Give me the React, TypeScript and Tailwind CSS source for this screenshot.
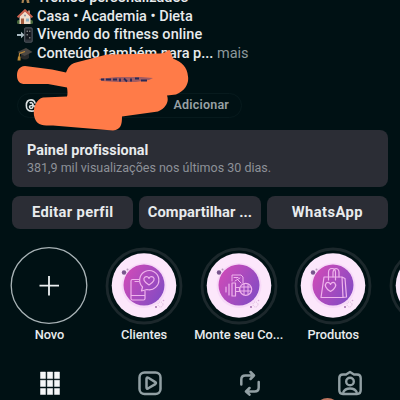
import type { ReactNode } from "react";

const swatch = "block h-4 w-4 shrink-0";

function RunnerIcon() {
  return (
    <svg viewBox="0 0 16 16" className={swatch}>
      <path d="M5.500 0h5l1 6 1 7h-2.500l-1-4-1-2-1.500 6H4.500l1-7z" fill="#a98352" />
      <path d="M6 0h4v5H6z" fill="#c49a52" />
    </svg>
  );
}

function HouseIcon() {
  return (
    <svg viewBox="0 0 16 16" className={swatch}>
      <rect x="0" y="11" width="16" height="4" rx="1.500" fill="#46683b" />
      <rect x="11" y="1.500" width="2" height="4" fill="#b98d7c" />
      <path d="M2.500 7 8 2l5.500 5v8h-11z" fill="#f0dccb" />
      <path d="M0.600 8.300 8 1.200l7.400 7.100" fill="none" stroke="#c9604d" strokeWidth="2" />
      <rect x="4" y="9.500" width="3" height="5.500" fill="#a35b3e" />
      <rect x="9" y="9.500" width="3" height="3" fill="#91b5c7" />
      <circle cx="8" cy="6.500" r="1" fill="#86929c" />
    </svg>
  );
}

function PhoneArrowIcon() {
  return (
    <svg viewBox="0 0 16 16" className={swatch}>
      <rect x="7.500" y="0.700" width="7.800" height="14.600" rx="1.300" fill="#30353c" stroke="#5f636b" strokeWidth="0.700" />
      <rect x="8.700" y="2.500" width="5.400" height="10" fill="#15181f" />
      <path d="M9.500 3.500h1.500v1.500H9.500zM12 3.500h1.500v1.500H12zM9.500 7h1.500v1.500H9.500zM12 10h1.500v1.500H12z" fill="#777b7c" />
      <path d="M0 7h4V4.800L7.500 8 4 11.200V9H0z" fill="#a9bac2" />
    </svg>
  );
}

function GraduationIcon() {
  return (
    <svg viewBox="0 0 16 16" className={swatch}>
      <path d="M4 7v5q4 3 8 0V7z" fill="#292a2a" />
      <path d="M0.500 6 9 2l6.500 4-8 4z" fill="#4b4743" />
      <path d="M8 5.500 2.500 7.500 2 13" fill="none" stroke="#b98739" strokeWidth="1.200" />
      <path d="M1 10.500h2.500v4H0.500z" fill="#bf8b35" />
    </svg>
  );
}

function BioLine({ icon, children }: { icon: ReactNode; children: ReactNode }) {
  return (
    <div className="flex h-[18.5px] items-center gap-1 whitespace-nowrap">
      {icon}
      {children}
    </div>
  );
}

function Scribble() {
  return (
    <svg viewBox="0 0 200 90" className="absolute top-[50px] left-0 h-[90px] w-[200px]">
      <path
        d="M25 15.500C19 16 17 20 17 25C17 31 20 33.500 25 33.500L48 33.500L67 37Q68 43 67 46L43 47C36 49 33 57 34 65C36 76 44 75 53 75L113 80C121 79 122 74 122 66L158 61C167 57 169 50 167 45L176 44C186 40 189 32 188 26C187 16 182 12 173 8L170 0C168 -2 167 3 160 3L107 4L76 12C69 14 68 18 66 22L52 19Z"
        transform="translate(0 .5)"
        fill="#ff7b48"
      />
      <path d="M99 29q4-1 9-1l8-1 9 0 16 0 12 1-4 2-13 2-20 0-14-1z" fill="#a25c61" />
      <path d="M101 29.500h3m2 0h5m2 0h4m3-1v3m4-3 3 3m4-3v3m4-3h4m2 2h6" fill="none" stroke="#292a56" strokeWidth="1.800" />
    </svg>
  );
}

function PhoneHeart() {
  return (
    <g>
      <path d="M34 32.500h-6.500q-1.500 0-1.500 1.500v17.500q0 1.500 1.500 1.500h11q1.500 0 1.500-1.500V44M26 48.500h14M30 34.500h3.500" />
      <path d="M37.500 40A9.600 9.600 0 1 1 42 42.500l-5.500 1.500z" />
      <path d="M44 38c-5.500-3.500-6-6-4.200-7.800 1.700-1.500 3.700-.2 4.200 1.300 .500-1.500 2.500-2.800 4.200-1.300 1.800 1.800 1.300 4.300-4.200 7.800z" />
    </g>
  );
}

function Dumbbell() {
  return (
    <g>
      <path d="M26 40v5M29 37v11M32 36v13h3.500V36zM35.500 40.500h4v4h-4" />
      <circle cx="45.700" cy="42.300" r="6" />
      <path d="M32 34v-6h9l2 2v6M34 30.500h4M35 34l5-3M37 32l4 4M41 40h9.500M40.500 44H51M44 37v10.500M48 38v9" strokeWidth="1" />
    </g>
  );
}

function ShoppingBag() {
  return (
    <g>
      <path d="M30 30h18l1 20.500H27zM48 30l3 1.500 1.500 18.500-3.500.5" />
      <path d="M34.500 33v-7.500q0-4 3.500-4t3.500 4V33M39 30v-5q.5-3 3-3.500 3 .5 3 4v4.500" />
      <path d="M36.500 44.500c-5.500-3.500-6-6.500-4.200-8.500 1.700-1.500 3.700 0 4.200 1.500 .500-1.500 2.500-3 4.200-1.500 1.800 2 1.300 5-4.200 8.500z" />
    </g>
  );
}

function Cover({ children }: { children?: ReactNode }) {
  return (
    <svg viewBox="0 0 78 78" className="h-[78px] w-[78px]">
      <defs>
        <linearGradient id="story" x1="0" y1="0.200" x2="1" y2="0.800">
          <stop stopColor="#cf4bb8" />
          <stop offset="1" stopColor="#824bc4" />
        </linearGradient>
      </defs>
      <circle cx="39" cy="39" r="37" fill="none" stroke="#1c282c" strokeWidth="2.800" />
      <circle cx="39" cy="38.500" r="32.300" fill="#fce7fb" />
      <circle cx="39" cy="38.500" r="22.500" fill="#f7d9f8" />
      <circle cx="39" cy="38" r="20.500" fill="url(#story)" />
      <circle cx="19" cy="25.500" r="2.200" fill="#78558d" />
      <circle cx="22.500" cy="22.500" r="1" fill="#b69aba" />
      <circle cx="51" cy="60" r="1" fill="#a56eac" />
      <circle cx="55.500" cy="57.500" r="2.500" fill="none" stroke="#ddb8dc" strokeDasharray="1 1" />
      <circle cx="58.500" cy="53.500" r=".8" fill="#d8a9d8" />
      <g fill="none" stroke="#efb3ec" strokeWidth="1.200" strokeLinecap="round" strokeLinejoin="round">
        {children}
      </g>
    </svg>
  );
}

function Highlight({ cover, children }: { cover: ReactNode; children?: ReactNode }) {
  return (
    <div className="flex w-[94.6px] shrink-0 flex-col items-center">
      {cover}
      <div className="mt-0.5 h-4 text-[12.8px] leading-4 font-medium tracking-[-0.06px] whitespace-nowrap text-[#e8ebed]">{children}</div>
    </div>
  );
}

function ProfileTabs() {
  return (
    <nav className="mt-[26.5px] flex h-[29px] text-[#92a0a4]">
      <div className="flex w-[100px] justify-center">
        <svg viewBox="0 0 24 26" className="h-[26px] w-6" fill="#f5f7f8">
          <path d="M2.500 2h5v6.500h-5zM9.300 2h5.400v6.500H9.300zM16.500 2h5v6.500h-5zM2.500 10.300h5v6.200h-5zM9.300 10.300h5.400v6.200H9.300zM16.500 10.300h5v6.200h-5zM2.500 18.500h5v6h-5zM9.300 18.500h5.400v6H9.300zM16.500 18.500h5v6h-5z" stroke="#f5f7f8" strokeWidth=".5" />
        </svg>
      </div>
      <div className="flex w-[100px] justify-center">
        <svg viewBox="0 0 26 26" className="h-[26px] w-[26px]" fill="none" stroke="currentColor" strokeWidth="2.500" strokeLinejoin="round">
          <rect x="2.500" y="2.500" width="21" height="21.500" rx="5" />
          <path d="M9.500 8.800q0-2 1.800-1l7 4.300q1.300 1 0 2l-7 4.200q-1.800 1-1.800-1z" />
        </svg>
      </div>
      <div className="flex w-[100px] justify-center">
        <svg viewBox="0 0 26 26" className="h-[26px] w-[26px]" fill="none" stroke="currentColor" strokeWidth="2.500" strokeLinecap="round" strokeLinejoin="round">
          <path d="M4.300 14.500V9.500q0-4 4-4H17M13.500 2 17 5.500 13.500 9" />
          <path d="M21.700 12v5.500q0 4-4 4H9M12.500 18 9 21.500l3.500 3.200" />
        </svg>
      </div>
      <div className="flex w-[100px] justify-center">
        <svg viewBox="0 0 26 26" className="h-[26px] w-[26px]" fill="none" stroke="currentColor" strokeWidth="2.400" strokeLinejoin="round">
          <path d="M6 4.500h3L13 2l4 2.500h3q3.700 0 3.700 3.500v12q0 4-3.700 4H6q-3.700 0-3.700-4V8q0-3.500 3.700-3.500z" />
          <circle cx="13" cy="11.500" r="3.800" />
          <path d="M6 23q1.500-4.500 7-4.500t7 4.500" />
        </svg>
      </div>
    </nav>
  );
}

export default function App() {
  return (
    <div className="relative h-[400px] w-[400px] overflow-hidden bg-[#001114] font-['Roboto','Noto_Sans',sans-serif] text-[#e8ebed]">
      <header className="relative h-[130px]">
        <div className="h-[63px] overflow-hidden pl-[17px] text-[14.5px] font-medium">
          <div className="-mt-[11px]">
            <BioLine icon={<RunnerIcon />}><span>Treinos personalizados</span></BioLine>
            <BioLine icon={<HouseIcon />}><span>Casa • Academia • Dieta</span></BioLine>
            <BioLine icon={<PhoneArrowIcon />}><span className="tracking-[0.07px]">Vivendo do fitness online</span></BioLine>
            <BioLine icon={<GraduationIcon />}>
              <span>Conteúdo também para p... <span className="font-normal text-[#8d989c]">mais</span></span>
            </BioLine>
          </div>
        </div>
        <div className="mt-[30px] ml-[17px] flex h-[25px] w-[225px] items-center justify-between rounded-full border border-[#071a1d] pr-2 pl-1.5">
          <svg viewBox="0 0 16 16" className="h-[15px] w-[15px]" fill="none" stroke="#dce2e3" strokeWidth="1.700">
            <path d="M12 6Q11 2 7.500 2 2.500 2 2.500 8t5.500 6q5 0 4.500-3.500Q12 8 8.500 8 5.500 8 6 10q1 2 3 .500Q10.500 9 9.500 6.500 8.500 4 6 5.500" />
          </svg>
          <span className="pr-1 text-[12.5px] font-semibold tracking-[0.2px] text-[#98a1a5]">Adicionar</span>
        </div>
        <Scribble />
      </header>

      <main>
        <section className="mx-3 flex h-[57px] flex-col rounded-lg bg-[#2b2d35] px-[15px] pt-3">
          <h1 className="text-[14.4px] leading-[18px] font-bold tracking-[0.05px] whitespace-nowrap">Painel profissional</h1>
          <p className="text-[12.5px] leading-4 whitespace-nowrap text-[#8d9198]">381,9 mil visualizações nos últimos 30 dias.</p>
        </section>
        <div className="mx-3 mt-[9px] grid h-[33px] grid-cols-3 gap-1.5 text-[14.7px] font-bold tracking-[0.08px] whitespace-nowrap">
          <button className="rounded-lg bg-[#2b2d35] tracking-[0.35px]">Editar perfil</button>
          <button className="rounded-lg bg-[#2b2d35]">Compartilhar ...</button>
          <button className="rounded-lg bg-[#2b2d35] tracking-[0.45px]">WhatsApp</button>
        </div>
        <section className="mt-[18px] ml-[2.2px] flex h-[96px] w-[474px]">
          <Highlight
            cover={
              <svg viewBox="0 0 78 78" className="h-[78px] w-[78px]" fill="none">
                <circle cx="39" cy="38.500" r="37.800" stroke="#a8b3b6" strokeWidth="1.300" />
                <path d="M39 29v19.500M29.500 38.700H49" stroke="#edf1f2" strokeWidth="1.800" />
              </svg>
            }
          >Novo</Highlight>
          <Highlight cover={<Cover><PhoneHeart /></Cover>}>Clientes</Highlight>
          <Highlight cover={<Cover><Dumbbell /></Cover>}>Monte seu Co...</Highlight>
          <Highlight cover={<Cover><ShoppingBag /></Cover>}>Produtos</Highlight>
          <Highlight cover={<Cover />} />
        </section>
        <ProfileTabs />
      </main>
      <div className="absolute top-[398px] left-[316px] h-5 w-[23px] rounded-[50%] bg-[#bd755f]" />
    </div>
  );
}
